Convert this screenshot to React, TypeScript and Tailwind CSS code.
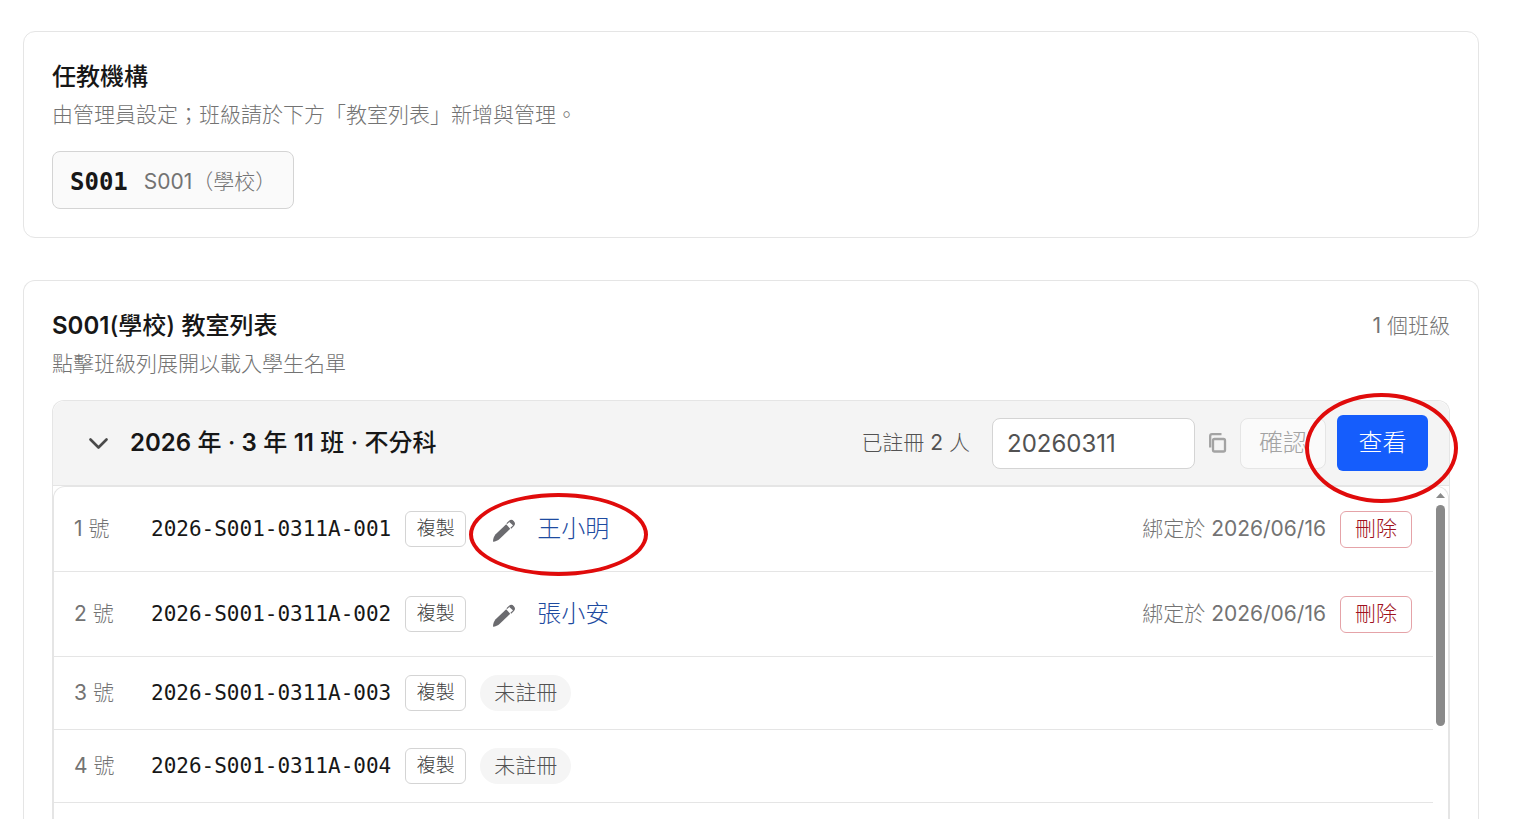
type Student = {
  no: number;
  code: string;
  name?: string;
  boundAt?: string;
};

const students: Student[] = [
  { no: 1, code: '2026-S001-0311A-001', name: '王小明', boundAt: '2026/06/16' },
  { no: 2, code: '2026-S001-0311A-002', name: '張小安', boundAt: '2026/06/16' },
  { no: 3, code: '2026-S001-0311A-003' },
  { no: 4, code: '2026-S001-0311A-004' },
];

function ChevronIcon() {
  return (
    <svg width="20" height="20" viewBox="0 0 20 20" fill="none" aria-hidden="true">
      <path d="M2.5 6.500 10.500 14.500l8-8" stroke="#4a4a4a" strokeWidth="2.600" strokeLinecap="round" strokeLinejoin="round" />
    </svg>
  );
}

function CopyIcon() {
  return (
    <svg width="18" height="20" viewBox="0 0 18 20" fill="none" aria-hidden="true">
      <rect x="4" y="6" width="12" height="12.500" rx="1.500" stroke="#a3a3a3" strokeWidth="2.300" />
      <path d="M1.200 14.500V3A1.800 1.800 0 0 1 3 1.200h9.500" stroke="#a3a3a3" strokeWidth="2.300" />
    </svg>
  );
}

function PencilIcon() {
  return (
    <svg width="24" height="24" viewBox="0 0 24 24" aria-hidden="true">
      <path d="M1 22.800C1 20 1.800 17.200 3.600 15.200L14.200 5.200 18.200 9.800 7.800 19.800C6 21.500 3.500 22.600 1 22.800Z" fill="#6b6b6f" />
      <path d="M14.800 4.600 17.200 2.400C18.600 1.200 20.400 1.500 21.400 2.600 22.600 3.900 22.500 5.600 21.300 6.800L18.800 9.200" fill="none" stroke="#6b6b6f" strokeWidth="1.200" />
      <path d="M17 2.700C18.400 1.400 20.300 1.500 21.400 2.600 22.500 3.900 22.500 5.500 21.400 6.700Z" fill="#6b6b6f" />
    </svg>
  );
}

function StudentRow({ student, circled }: { student: Student; circled: boolean }) {
  return (
    <li className="flex items-center border-b border-[#e5e5e5] py-[18px] pr-[21px] pl-5">
      <span className="w-[77px] text-[21px] leading-8 text-[#737373]">
        <span className="font-normal">{student.no}</span> 號
      </span>
      <span className="mr-[14px] font-['DejaVu_Sans_Mono',monospace] text-[21px] leading-8 font-normal text-[#171717]">
        {student.code}
      </span>
      <button
        type="button"
        className="mr-[14px] flex h-9 w-[61px] items-center justify-center rounded-md border border-[#d4d4d4] bg-white text-[19px] text-[#404040]"
      >
        複製
      </button>
      {student.name ? (
        <div className="relative flex items-center">
          <button type="button" aria-label="編輯姓名" className="flex size-12 items-center justify-center pt-1">
            <PencilIcon />
          </button>
          <a href="#student" className="ml-[9px] text-2xl leading-8 text-[#1e4ba0]">
            {student.name}
          </a>
          {circled && (
            <span className="pointer-events-none absolute -top-3 -left-[11px] h-[83px] w-[179px] rounded-[50%] border-4 border-[#e00b0b]" />
          )}
        </div>
      ) : (
        <span className="flex h-9 items-center rounded-full bg-[#f5f5f5] px-[14px] text-[21px] text-[#525252]">未註冊</span>
      )}
      {student.boundAt && (
        <div className="ml-auto flex items-center gap-[14px]">
          <span className="text-[21px] leading-8 text-[#737373]">
            綁定於 <span className="font-normal">{student.boundAt}</span>
          </span>
          <button
            type="button"
            className="flex h-[37px] w-[72px] items-center justify-center rounded-md border border-[#e5a3a8] bg-white text-[21px] text-[#9f1220]"
          >
            刪除
          </button>
        </div>
      )}
    </li>
  );
}

export default function App() {
  return (
    <main className="flex min-h-screen flex-col gap-[42px] bg-white pt-[31px] pr-[57px] pl-[23px] font-['Inter','Noto_Sans_CJK_TC',sans-serif] font-light">
      <section className="rounded-xl border border-[#e5e5e5] p-7">
        <h2 className="text-2xl leading-[34px] font-medium text-[#171717]">任教機構</h2>
        <p className="mt-[5px] text-[21px] leading-8 text-[#737373]">
          由管理員設定；班級請於下方「教室列表」新增與管理。
        </p>
        <div className="mt-5 inline-flex h-[58px] items-center gap-4 rounded-lg border border-[#d4d4d4] bg-[#fafafa] px-[17px] pt-1 align-top">
          <span className="font-['DejaVu_Sans_Mono',monospace] text-2xl font-bold text-[#171717]">S001</span>
          <span className="text-[21px] text-[#737373]">
            <span className="font-normal">S001</span>（學校）
          </span>
        </div>
      </section>

      <section className="flex flex-1 flex-col rounded-t-xl border border-b-0 border-[#e5e5e5] px-7 pt-7">
        <div className="flex items-center justify-between">
          <h2 className="text-2xl leading-[34px] font-medium text-[#171717]">
            <span className="font-semibold">S001</span>(學校) 教室列表
          </h2>
          <span className="text-[21px] leading-[34px] text-[#737373]">
            <span className="font-normal">1</span> 個班級
          </span>
        </div>
        <p className="mt-[5px] text-[21px] leading-8 text-[#737373]">點擊班級列展開以載入學生名單</p>

        <div className="mt-5 flex flex-1 flex-col rounded-t-xl border border-b-0 border-[#e5e5e5]">
          <div className="flex h-[85px] items-center rounded-t-xl border-b border-[#e5e5e5] bg-[#f4f4f4] pr-[21px] pl-[35px]">
            <button type="button" className="flex items-center gap-[22px]" aria-expanded="true">
              <ChevronIcon />
              <span className="text-2xl leading-8 font-medium text-[#171717]">
                <span className="font-semibold">2026</span> 年 · <span className="font-semibold">3</span> 年{' '}
                <span className="font-semibold">11</span> 班 · 不分科
              </span>
            </button>
            <div className="ml-auto flex items-center">
              <span className="mr-[22px] text-[21px] leading-8 text-[#525252]">
                已註冊 <span className="font-normal">2</span> 人
              </span>
              <input
                type="text"
                aria-label="班級代碼"
                defaultValue="20260311"
                className="h-[51px] w-[203px] rounded-lg border border-[#d4d4d4] bg-white px-[14px] text-2xl font-normal text-[#525252]"
              />
              <button type="button" aria-label="複製班級代碼" className="flex w-[45px] items-center justify-center">
                <CopyIcon />
              </button>
              <button
                type="button"
                disabled
                className="mr-[11px] h-[51px] w-[86px] rounded-lg border border-[#e5e5e5] bg-[#fafafa] text-2xl text-[#a3a3a3]"
              >
                確認
              </button>
              <div className="relative">
                <button type="button" className="h-14 w-[91px] rounded-md bg-[#155dfc] text-2xl text-white">
                  查看
                </button>
                <span className="pointer-events-none absolute -top-[22px] -left-8 z-10 h-[110px] w-[153px] rounded-[50%] border-4 border-[#e00b0b]" />
              </div>
            </div>
          </div>

          <div className="flex flex-1 rounded-t-xl border border-b-0 border-[#e5e5e5]">
            <ul className="flex-1">
              {students.map((student) => (
                <StudentRow key={student.no} student={student} circled={student.no === 1} />
              ))}
            </ul>
            <div className="flex w-[15px] flex-col items-center rounded-tr-xl pt-[6px]" aria-hidden="true">
              <svg width="9" height="5" viewBox="0 0 9 5">
                <path d="M4.500 0 9 5H0Z" fill="#8a8a8a" />
              </svg>
              <div className="mt-[7px] h-[221px] w-[9px] rounded-full bg-[#8a8a8a]" />
            </div>
          </div>
        </div>
      </section>
    </main>
  );
}
